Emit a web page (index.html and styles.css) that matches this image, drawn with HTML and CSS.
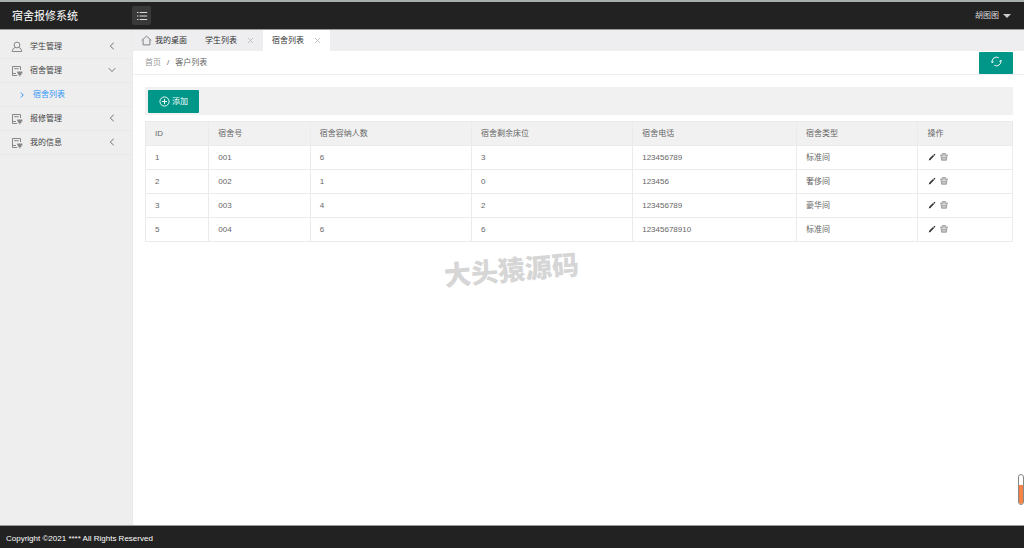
FILE: index.html
```html
<!DOCTYPE html>
<html lang="zh-CN">
<head>
<meta charset="utf-8">
<title>宿舍报修系统</title>
<link rel="stylesheet" href="styles.css">
</head>
<body>
<svg class="sprite" aria-hidden="true">
  <symbol id="i-user" viewBox="0 0 12 12"><circle cx="6" cy="4" r="2.9"/><path d="M4.2 6.4C2.4 7.2 1.3 8.6 1.2 10.5H10.8C10.7 8.6 9.6 7.2 7.8 6.4"/></symbol>
  <symbol id="i-form" viewBox="0 0 12 12"><path d="M9.5 5V1.5H1.5V10.5H6.2M3.2 3.7H7.8M1.5 8.5H5"/><path class="solid" d="M6.2 6.6H11.4V8.2H10.7L10.2 10H9.4V11.2H8.2V10H7.4L6.9 8.2H6.2Z"/></symbol>
  <symbol id="i-left" viewBox="0 0 8 8"><path d="M5.8 .8L2.2 4L5.8 7.2"/></symbol>
  <symbol id="i-down" viewBox="0 0 8 8"><path d="M.8 2.2L4 5.6L7.2 2.2"/></symbol>
  <symbol id="i-right" viewBox="0 0 8 8"><path d="M2.8 1.5L5.2 4L2.8 6.5"/></symbol>
  <symbol id="i-close" viewBox="0 0 8 8"><path d="M1.2 1.2L6.8 6.8M6.8 1.2L1.2 6.8"/></symbol>
  <symbol id="i-home" viewBox="0 0 12 12"><path d="M.8 6L6 1.2L11.2 6M2.3 5V10.8H9.7V5"/></symbol>
  <symbol id="i-plus" viewBox="0 0 12 12"><circle cx="6" cy="6" r="5"/><path d="M6 3.2V8.8M3.2 6H8.8"/></symbol>
  <symbol id="i-refresh" viewBox="0 0 12 12"><path d="M1.3 7.2A4.8 4.8 0 0 1 8.4 1.9M10.7 4.8A4.8 4.8 0 0 1 3.6 10.1M0 5.8L1.3 7.4L2.9 6.1M9.1 5.9L10.7 4.6L12 6.2"/></symbol>
  <symbol id="i-menu" viewBox="0 0 12 10"><path d="M1 1.5H2.4M3.6 1.5H11.2M1 5H2.4M3.6 5H11.2M1 8.5H2.4M3.6 8.5H11.2"/></symbol>
  <symbol id="i-edit" viewBox="0 0 8 8"><path class="solid" d="M.8 7.4L1.2 5.8L5 2L6.2 3.1L2.4 6.9ZM5.4 1.6L6.2 .9Q6.5 .7 6.8 1L7.2 1.4Q7.4 1.7 7.2 2L6.6 2.7Z"/></symbol>
  <symbol id="i-trash" viewBox="0 0 8 8"><path class="solid pale" d="M1 2.6H7L6.6 7.4H1.4Z"/><path d="M0 2.1H8M2.4 1.8V.6H5.6V1.8M1.1 2.6L1.5 7.1H6.5L6.9 2.6M3 4V5.8M5 4V5.8"/></symbol>
</svg>

<header class="topbar">
  <a class="brand" href="#">宿舍报修系统</a>
  <button class="menu-toggle" type="button" aria-label="折叠菜单"><svg class="icon-menu"><use href="#i-menu"/></svg></button>
  <button class="account" type="button">胡图图<span class="caret"></span></button>
</header>

<div class="shell">
  <nav class="sidebar">
    <a class="nav-item" href="#"><svg class="icon-nav"><use href="#i-user"/></svg>学生管理<svg class="icon-arrow"><use href="#i-left"/></svg></a>
    <a class="nav-item" href="#"><svg class="icon-nav"><use href="#i-form"/></svg>宿舍管理<svg class="icon-arrow"><use href="#i-down"/></svg></a>
    <a class="nav-item nav-sub" href="#"><svg class="icon-sub"><use href="#i-right"/></svg>宿舍列表</a>
    <a class="nav-item" href="#"><svg class="icon-nav"><use href="#i-form"/></svg>报修管理<svg class="icon-arrow"><use href="#i-left"/></svg></a>
    <a class="nav-item" href="#"><svg class="icon-nav"><use href="#i-form"/></svg>我的信息<svg class="icon-arrow"><use href="#i-left"/></svg></a>
  </nav>

  <main class="main">
    <div class="tabs">
      <a class="tab tab-home" href="#"><svg class="icon-home"><use href="#i-home"/></svg>我的桌面</a>
      <a class="tab" href="#">学生列表<svg class="icon-close"><use href="#i-close"/></svg></a>
      <a class="tab active" href="#">宿舍列表<svg class="icon-close"><use href="#i-close"/></svg></a>
    </div>
    <div class="crumbs">
      <a class="crumb" href="#">首页</a><span class="slash">/</span><span class="crumb-current">客户列表</span>
      <button class="refresh" type="button" aria-label="刷新"><svg class="icon-refresh"><use href="#i-refresh"/></svg></button>
    </div>
    <section class="content">
      <div class="toolbar"><button class="add" type="button"><svg class="icon-plus"><use href="#i-plus"/></svg>添加</button></div>
      <table class="grid">
        <colgroup><col class="c-id"><col class="c-no"><col class="c-cap"><col class="c-cap"><col class="c-tel"><col class="c-type"><col class="c-op"></colgroup>
        <thead><tr><th>ID</th><th>宿舍号</th><th>宿舍容纳人数</th><th>宿舍剩余床位</th><th>宿舍电话</th><th>宿舍类型</th><th>操作</th></tr></thead>
        <tbody>
          <tr><td>1</td><td>001</td><td>6</td><td>3</td><td>123456789</td><td>标准间</td><td><div class="ops"><button type="button" aria-label="编辑" class="op edit"><svg><use href="#i-edit"/></svg></button><button type="button" aria-label="删除" class="op"><svg><use href="#i-trash"/></svg></button></div></td></tr>
          <tr><td>2</td><td>002</td><td>1</td><td>0</td><td>123456</td><td>奢侈间</td><td><div class="ops"><button type="button" aria-label="编辑" class="op edit"><svg><use href="#i-edit"/></svg></button><button type="button" aria-label="删除" class="op"><svg><use href="#i-trash"/></svg></button></div></td></tr>
          <tr><td>3</td><td>003</td><td>4</td><td>2</td><td>123456789</td><td>豪华间</td><td><div class="ops"><button type="button" aria-label="编辑" class="op edit"><svg><use href="#i-edit"/></svg></button><button type="button" aria-label="删除" class="op"><svg><use href="#i-trash"/></svg></button></div></td></tr>
          <tr><td>5</td><td>004</td><td>6</td><td>6</td><td>12345678910</td><td>标准间</td><td><div class="ops"><button type="button" aria-label="编辑" class="op edit"><svg><use href="#i-edit"/></svg></button><button type="button" aria-label="删除" class="op"><svg><use href="#i-trash"/></svg></button></div></td></tr>
        </tbody>
      </table>
    </section>
    <div class="watermark">大头猿源码</div>
    <div class="gauge"><div class="gauge-fill"></div></div>
  </main>
</div>

<footer class="footer">Copyright ©2021 **** All Rights Reserved</footer>
</body>
</html>
```
FILE: styles.css
```css
* { box-sizing: border-box; }
body {
  margin: 0;
  min-height: 100vh;
  display: flex;
  flex-direction: column;
  background: #fff;
  color: #666;
  font: 8px/12px "Liberation Sans", "Noto Sans CJK SC", sans-serif;
}
a { color: inherit; text-decoration: none; }
button { font: inherit; color: inherit; border: 0; padding: 0; background: none; cursor: pointer; }
svg { fill: none; stroke: currentColor; stroke-width: 1; flex: none; display: block; }
.sprite { position: absolute; width: 0; height: 0; }
.solid { fill: currentColor; stroke: none; }
.pale { opacity: .4; }

.topbar {
  display: flex;
  align-items: center;
  height: 30px;
  padding-right: 13px;
  background: #222;
  border-top: 2px solid #a9afae;
  border-bottom: 1px solid #999;
  color: #fff;
}
.brand { width: 132px; padding-left: 12px; font-size: 11px; line-height: 16px; }
.menu-toggle {
  display: grid;
  place-items: center;
  width: 19px;
  height: 19px;
  border-radius: 2px;
  background: #393939;
  color: #ddd;
}
.icon-menu { width: 12px; height: 10px; }
.account { display: flex; align-items: center; gap: 4px; margin-left: auto; color: #ddd; }
.caret { border: 4px solid transparent; border-top-color: #ccc; border-bottom: 0; }

.shell { display: flex; flex: 1; }
.sidebar { width: 133px; padding-top: 5px; background: #eee; border-right: 1px solid #eaeaea; }
.nav-item {
  display: flex;
  align-items: center;
  height: 24px;
  padding: 1px 16px 0 11px;
  border-bottom: 1px solid #e8e8e8;
  color: #444;
}
.icon-nav { width: 12px; height: 12px; margin: 0 7px 1px 0; color: #888; }
.icon-arrow { width: 8px; height: 8px; margin: 0 0 3px auto; color: #777; }
.nav-sub { padding-left: 18px; color: #3296fa; }
.icon-sub { width: 8px; height: 8px; margin-right: 7px; }

.main { position: relative; flex: 1; min-width: 0; }
.tabs { display: flex; height: 21px; background: #eeeef0; color: #333; }
.tab { display: flex; align-items: center; gap: 10px; padding: 0 9px; }
.tab-home { gap: 3px; padding-left: 8px; }
.tab.active { background: #fff; }
.icon-home { width: 11px; height: 11px; color: #777; }
.icon-close { width: 7px; height: 7px; color: #bbb; }
.crumbs {
  display: flex;
  align-items: center;
  height: 24px;
  padding: 0 11px 0 12px;
  border-bottom: 1px solid #eee;
}
.crumb { color: #999; }
.slash { margin: 0 6px; }
.refresh {
  display: grid;
  place-items: center;
  align-self: flex-end;
  width: 34px;
  height: 22px;
  margin-left: auto;
  padding-bottom: 4px;
  border-radius: 1px;
  background: #009688;
  color: #fff;
}
.icon-refresh { width: 11px; height: 11px; }

.content { padding: 12px 11px 12px 12px; }
.toolbar { display: flex; padding: 3px 3px 2px; margin-bottom: 6px; background: #f1f1f1; }
.add {
  display: flex;
  align-items: center;
  justify-content: center;
  gap: 2px;
  width: 51px;
  height: 23px;
  border-radius: 1px;
  background: #009688;
  color: #fff;
}
.icon-plus { width: 11px; height: 11px; }

.grid { width: 100%; border-collapse: collapse; table-layout: fixed; }
.grid th, .grid td {
  height: 24px;
  padding: 0 9px;
  border: 1px solid #ebebeb;
  font-weight: 400;
  text-align: left;
}
.grid th { background: #f1f1f1; }
.c-id { width: 7.3%; }
.c-no { width: 11.7%; }
.c-cap { width: 18.6%; }
.c-tel { width: 18.9%; }
.c-type { width: 14%; }
.c-op { width: 10.9%; }
.ops { display: flex; gap: 4px; padding: 0 0 2px 1px; }
.op { color: #999; }
.op.edit { color: #333; }
.op svg { width: 8px; height: 8px; }

.watermark {
  position: absolute;
  top: 223px;
  left: 311px;
  color: #d6d6d6;
  font-size: 27px;
  font-weight: 900;
  line-height: 36px;
  transform: rotate(-5deg);
}
.gauge {
  position: absolute;
  right: 0;
  bottom: 20px;
  display: flex;
  align-items: flex-end;
  width: 6px;
  height: 31px;
  border: 1px solid #888;
  border-radius: 3px;
  background: #fff;
}
.gauge-fill { width: 100%; height: 65%; border-radius: 0 0 2px 2px; background: #f58345; }

.footer {
  height: 23px;
  padding: 7px 6px 3px;
  border-top: 1px solid #999;
  background: #222;
  color: #fff;
}
```
